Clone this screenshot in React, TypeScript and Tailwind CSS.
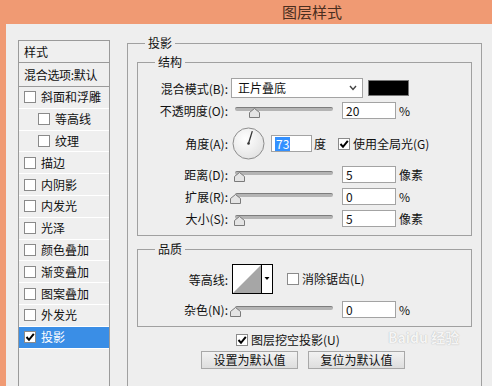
import React from 'react'

const font = "font-['Noto_Sans_CJK_SC','Noto_Sans',sans-serif]"

function Box({ checked = false }: { checked?: boolean }) {
  return (
    <span className="w-[12px] h-[12px] border border-[#8a8a8a] bg-white flex items-center justify-center shrink-0">
      {checked && (
        <svg width="10" height="10" viewBox="0 0 10 10">
          <path d="M1.5 5 L4 7.8 L8.8 1.8" fill="none" stroke="#000" strokeWidth="2" />
        </svg>
      )}
    </span>
  )
}

function Slider({ value }: { value: number }) {
  // track spans 5..103 inside a 108px wide control
  const left = 5 + value * 98 - 5.5
  return (
    <div className="relative w-[108px] h-[17px] shrink-0">
      <div className="absolute left-[5px] right-[5px] top-[5px] h-[4px] rounded-full bg-[#b4b4b4] border-t border-[#7d7d7d]" />
      <svg className="absolute top-[6px]" style={{ left }} width="11" height="10" viewBox="0 0 11 10">
        <polygon points="0.5,4.5 5.5,0.5 10.5,4.5 10.5,9.5 0.5,9.5" fill="#e4e4e4" stroke="#7a7a7a" />
      </svg>
    </div>
  )
}

function Field({ value, w = 'w-[54px]' }: { value: React.ReactNode; w?: string }) {
  return (
    <div className={`${w} h-[17px] bg-white border border-[#a3a3a3] flex items-center pl-[3px] leading-none shrink-0`}>
      {value}
    </div>
  )
}

function Label({ children }: { children: React.ReactNode }) {
  return <div className="w-[90px] text-right shrink-0 leading-[17px]">{children}</div>
}

const layers = [
  { t: '斜面和浮雕', sub: false },
  { t: '等高线', sub: true },
  { t: '纹理', sub: true },
  { t: '描边', sub: false },
  { t: '内阴影', sub: false },
  { t: '内发光', sub: false },
  { t: '光泽', sub: false },
  { t: '颜色叠加', sub: false },
  { t: '渐变叠加', sub: false },
  { t: '图案叠加', sub: false },
  { t: '外发光', sub: false },
  { t: '投影', sub: false, sel: true },
]

export default function App() {
  return (
    <div className={`w-[492px] h-[386px] overflow-hidden bg-[#f09a73] flex flex-col ${font} text-[12px] text-[#111]`}>
      {/* Title bar */}
      <div className="h-[24px] shrink-0 flex items-center justify-center pl-[132px] text-[15px] text-[#4a2e20]">
        图层样式
      </div>

      <div className="flex-1 ml-[6px] bg-[#eeeeee] flex items-start pl-[12px] pt-[10px] relative">
        {/* Styles list */}
        <div className="w-[92px] h-[360px] mt-[6px] shrink-0 border border-[#9a9a9a] bg-[#efefef]">
          <div className="h-[22px] border-b border-[#9a9a9a] pl-[5px] flex items-center">样式</div>
          <div className="h-[24px] border-b border-[#9a9a9a] pl-[5px] flex items-center whitespace-nowrap tracking-[-0.3px]">
            混合选项:默认
          </div>
          {layers.map((l) => (
            <div
              key={l.t}
              className={`h-[21.8px] flex items-center gap-[5px] border-b border-white ${l.sub ? 'pl-[19px]' : 'pl-[5px]'} ${l.sel ? 'bg-[#3a8ee6] text-white' : ''}`}
            >
              <Box checked={!!l.sel} />
              <span className={l.sel ? 'text-white' : ''}>{l.t}</span>
            </div>
          ))}
        </div>

        {/* Drop shadow panel */}
        <fieldset className="ml-[17px] w-[355px] h-[370px] shrink-0 border border-[#a0a0a0] px-[9px]">
          <legend className="ml-[8px] px-[3px] leading-[18px]">投影</legend>

          <fieldset className="mt-[1px] w-[335px] border border-[#a0a0a0] pb-[8px]">
            <legend className="ml-[17px] px-[3px] leading-[18px]">结构</legend>

            <div className="flex items-center mt-[7px] h-[20px]">
              <Label>混合模式(B):</Label>
              <div className="ml-[3px] w-[132px] h-[20px] bg-white border border-[#a3a3a3] flex items-center justify-between pl-[6px] pr-[5px]">
                <span>正片叠底</span>
                <svg width="8" height="6" viewBox="0 0 8 6">
                  <polyline points="1,1 4,4.5 7,1" fill="none" stroke="#444" strokeWidth="1.4" />
                </svg>
              </div>
              <div className="ml-[5px] w-[41px] h-[16px] bg-black border border-[#777]" />
            </div>

            <div className="flex items-center mt-[4px] h-[17px]">
              <Label>不透明度(O):</Label>
              <div className="ml-[2px]"><Slider value={0.2} /></div>
              <div className="ml-[4px]"><Field value="20" /></div>
              <span className="ml-[3px]">%</span>
            </div>

            <div className="flex items-center mt-[8px] h-[33px]">
              <Label>角度(A):</Label>
              <svg className="ml-[4px] shrink-0" width="33" height="33" viewBox="0 0 33 33">
                <defs>
                  <radialGradient id="dial" cx="40%" cy="35%" r="70%">
                    <stop offset="0%" stopColor="#ffffff" />
                    <stop offset="100%" stopColor="#e2e2e2" />
                  </radialGradient>
                </defs>
                <circle cx="16.5" cy="16.5" r="15.5" fill="url(#dial)" stroke="#8c8c8c" />
                <line x1="16.5" y1="16.5" x2="20.3" y2="4.1" stroke="#333" strokeWidth="1.3" />
                <circle cx="16.5" cy="16.5" r="1.3" fill="#333" />
              </svg>
              <div className="ml-[6px]">
                <Field w="w-[41px]" value={<span className="bg-[#3390ff] text-white px-[1px] leading-[14px]">73</span>} />
              </div>
              <span className="ml-[2px]">度</span>
              <span className="ml-[12px]"><Box checked /></span>
              <span className="ml-[3px]">使用全局光(G)</span>
            </div>

            <div className="flex items-center mt-[6px] h-[17px]">
              <Label>距离(D):</Label>
              <div className="ml-[2px]"><Slider value={0.05} /></div>
              <div className="ml-[4px]"><Field value="5" /></div>
              <span className="ml-[3px]">像素</span>
            </div>
            <div className="flex items-center mt-[5px] h-[17px]">
              <Label>扩展(R):</Label>
              <div className="ml-[2px]"><Slider value={0} /></div>
              <div className="ml-[4px]"><Field value="0" /></div>
              <span className="ml-[3px]">%</span>
            </div>
            <div className="flex items-center mt-[5px] h-[17px]">
              <Label>大小(S):</Label>
              <div className="ml-[2px]"><Slider value={0.05} /></div>
              <div className="ml-[4px]"><Field value="5" /></div>
              <span className="ml-[3px]">像素</span>
            </div>
          </fieldset>

          <fieldset className="mt-[4px] w-[335px] border border-[#a0a0a0] pb-[8px]">
            <legend className="ml-[17px] px-[3px] leading-[18px]">品质</legend>

            <div className="flex items-center mt-[6px] h-[30px]">
              <Label>等高线:</Label>
              <svg className="ml-[4px] shrink-0" width="41" height="30" viewBox="0 0 41 30">
                <rect x="0.5" y="0.5" width="40" height="29" fill="#fff" stroke="#000" />
                <polygon points="1,29 29,1 29,29" fill="#a6a6a6" />
                <line x1="29.5" y1="1" x2="29.5" y2="29" stroke="#000" />
                <polygon points="32.5,13 37.5,13 35,16" fill="#000" />
              </svg>
              <span className="ml-[14px]"><Box /></span>
              <span className="ml-[3px]">消除锯齿(L)</span>
            </div>

            <div className="flex items-center mt-[7px] h-[17px]">
              <Label>杂色(N):</Label>
              <div className="ml-[2px]"><Slider value={0} /></div>
              <div className="ml-[4px]"><Field value="0" /></div>
              <span className="ml-[3px]">%</span>
            </div>
          </fieldset>

          <div className="flex items-center mt-[6px] ml-[99px] h-[14px] gap-[3px]">
            <Box checked />
            <span>图层挖空投影(U)</span>
          </div>

          <div className="flex mt-[4px] ml-[64px] gap-[10px]">
            <button className="w-[97px] h-[18px] border border-[#a8a8a8] bg-gradient-to-b from-[#f2f2f2] to-[#dedede] leading-none">
              设置为默认值
            </button>
            <button className="w-[97px] h-[18px] border border-[#a8a8a8] bg-gradient-to-b from-[#f2f2f2] to-[#dedede] leading-none">
              复位为默认值
            </button>
          </div>
        </fieldset>

        {/* Watermark */}
        <div className="absolute left-[382px] top-[306px] whitespace-nowrap text-[14px] font-bold text-[#f7f7f7] opacity-80 [text-shadow:0_0_1px_#9a9a9a] leading-none pointer-events-none">
          Baidu 经验
        </div>
      </div>
    </div>
  )
}
